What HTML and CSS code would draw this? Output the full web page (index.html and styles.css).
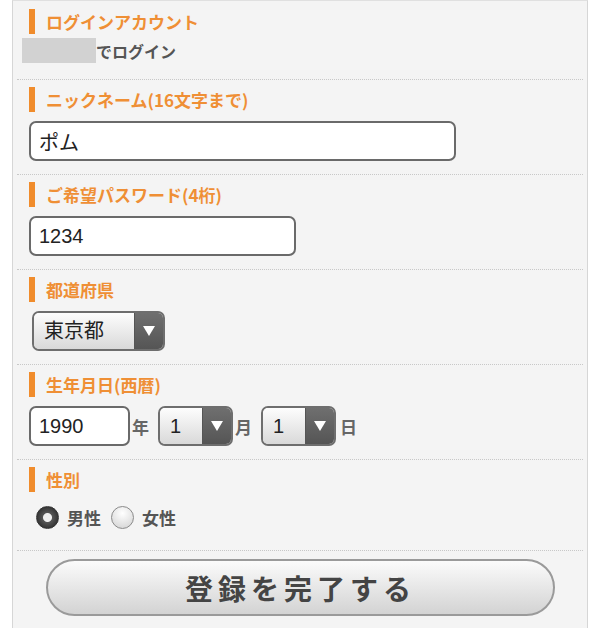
FILE: index.html
```html
<!DOCTYPE html>
<html>
  <head>
    <meta name="viewport" content="width=device-width, initial-scale=1" />
    <link rel="stylesheet" href="styles.css">
  </head>
  <body>
    <div class="panel">
      <form id="registerForm">
        <div class="field field-first">
          <div class="label">ログインアカウント</div>
          <div class="account">
            <span class="masked"></span>でログイン
          </div>
        </div>

        <div class="field">
          <div class="label">ニックネーム(16文字まで)</div>
          <input type="text" class="text nick" value="ポム" />
        </div>

        <div class="field">
          <div class="label">ご希望パスワード(4桁)</div>
          <input type="text" class="text pass" value="1234" />
        </div>

        <div class="field">
          <div class="label">都道府県</div>
          <div class="select pref">
            <span class="val">東京都</span>
            <span class="arrow"></span>
          </div>
        </div>

        <div class="field">
          <div class="label">生年月日(西暦)</div>
          <div class="row">
            <input type="text" class="text year" value="1990" />
            <span class="unit">年</span>
            <div class="select small">
              <span class="val">1</span>
              <span class="arrow"></span>
            </div>
            <span class="unit">月</span>
            <div class="select small">
              <span class="val">1</span>
              <span class="arrow"></span>
            </div>
            <span class="unit">日</span>
          </div>
        </div>

        <div class="field field-gender">
          <div class="label">性別</div>
          <div class="radios">
            <span class="radio checked"></span>
            <span class="radio-text">男性</span>
            <span class="radio"></span>
            <span class="radio-text">女性</span>
          </div>
        </div>

        <div class="submit-area">
          <button type="submit">登録を完了する</button>
        </div>
      </form>
    </div>
  </body>
</html>
```

FILE: styles.css
```css
* {
  box-sizing: border-box;
}
body {
  margin: 0;
  background-color: #fff;
  font-family: "Liberation Sans", "Noto Sans CJK JP", sans-serif;
}

.panel {
  margin: 0 12px;
  min-height: 628px;
  background-color: #f4f4f4;
  border-left: 1px solid #d6d6d6;
  border-right: 1px solid #d6d6d6;
  border-top: 1px solid #e0e0e0;
}

.field {
  margin: 0 4px;
  padding: 7px 12px 13px 12px;
  border-bottom: 1px dotted #c8c8c8;
}
.field-first {
  padding-top: 8px;
  padding-bottom: 16px;
}
.field-gender {
  padding-bottom: 18px;
}

.label {
  height: 25px;
  line-height: 25px;
  border-left: 6px solid #f08c2c;
  padding-left: 11px;
  margin-bottom: 9px;
  color: #ef8f35;
  font-family: "Noto Sans CJK JP", sans-serif;
  font-size: 17px;
  font-weight: bold;
}
.field-first .label {
  margin-bottom: 4px;
}

.account {
  display: flex;
  align-items: center;
  margin-left: -7px;
  height: 25px;
  color: #555;
  font-size: 16px;
  font-weight: bold;
}
.masked {
  width: 74px;
  height: 25px;
  background-color: #d2d2d2;
}

input.text {
  display: block;
  height: 40px;
  padding: 0 8px;
  border: 2px solid #6a6a6a;
  border-radius: 7px;
  background-color: #fff;
  color: #222;
  font-family: "Liberation Sans", "Noto Sans CJK JP", sans-serif;
  font-size: 20px;
}
.nick {
  width: 427px;
}
.pass {
  width: 267px;
}
.year {
  width: 101px;
}

.select {
  display: flex;
  height: 40px;
  border: 2px solid #6e6e6e;
  border-radius: 7px;
  overflow: hidden;
}
.select .val {
  flex: 1;
  line-height: 36px;
  padding-left: 10px;
  color: #222;
  font-size: 20px;
  background: linear-gradient(#fdfdfd, #d9d9d9);
}
.select .arrow {
  width: 29px;
  display: flex;
  align-items: center;
  justify-content: center;
  background: linear-gradient(#6f6f6f, #555);
  border-left: 1px solid #555;
}
.select .arrow::after {
  content: "";
  border-left: 6px solid transparent;
  border-right: 6px solid transparent;
  border-top: 10px solid #fff;
}
.pref {
  width: 133px;
  margin-left: 3px;
}
.small {
  width: 75px;
}

.row {
  display: flex;
  align-items: center;
}
.unit {
  color: #666;
  font-size: 17px;
  font-weight: bold;
  padding: 0 9px 0 2px;
}
.unit:last-child {
  padding-left: 4px;
}

.radios {
  display: flex;
  align-items: center;
  height: 30px;
  margin-top: 10px;
  padding-left: 7px;
}
.radio {
  width: 23px;
  height: 23px;
  border-radius: 50%;
  border: 1px solid #8a8a8a;
  background: radial-gradient(circle at 50% 30%, #fff, #d0d0d0);
}
.radio.checked {
  border: 1px solid #333;
  background: radial-gradient(circle, #f0f0f0 0, #f0f0f0 4px, #555 5px, #333 11px);
}
.radio-text {
  color: #555;
  font-size: 17px;
  font-weight: bold;
  margin: 0 10px 0 8px;
}

.submit-area {
  padding: 8px 33px 0 33px;
}
button {
  display: block;
  width: 509px;
  height: 57px;
  border: 2px solid #9a9a9a;
  border-radius: 29px;
  background: linear-gradient(#fbfbfb, #d3d3d3);
  color: #444;
  font-family: "Noto Sans CJK JP", sans-serif;
  font-size: 28px;
  font-weight: bold;
  letter-spacing: 5px;
  cursor: pointer;
}
```
